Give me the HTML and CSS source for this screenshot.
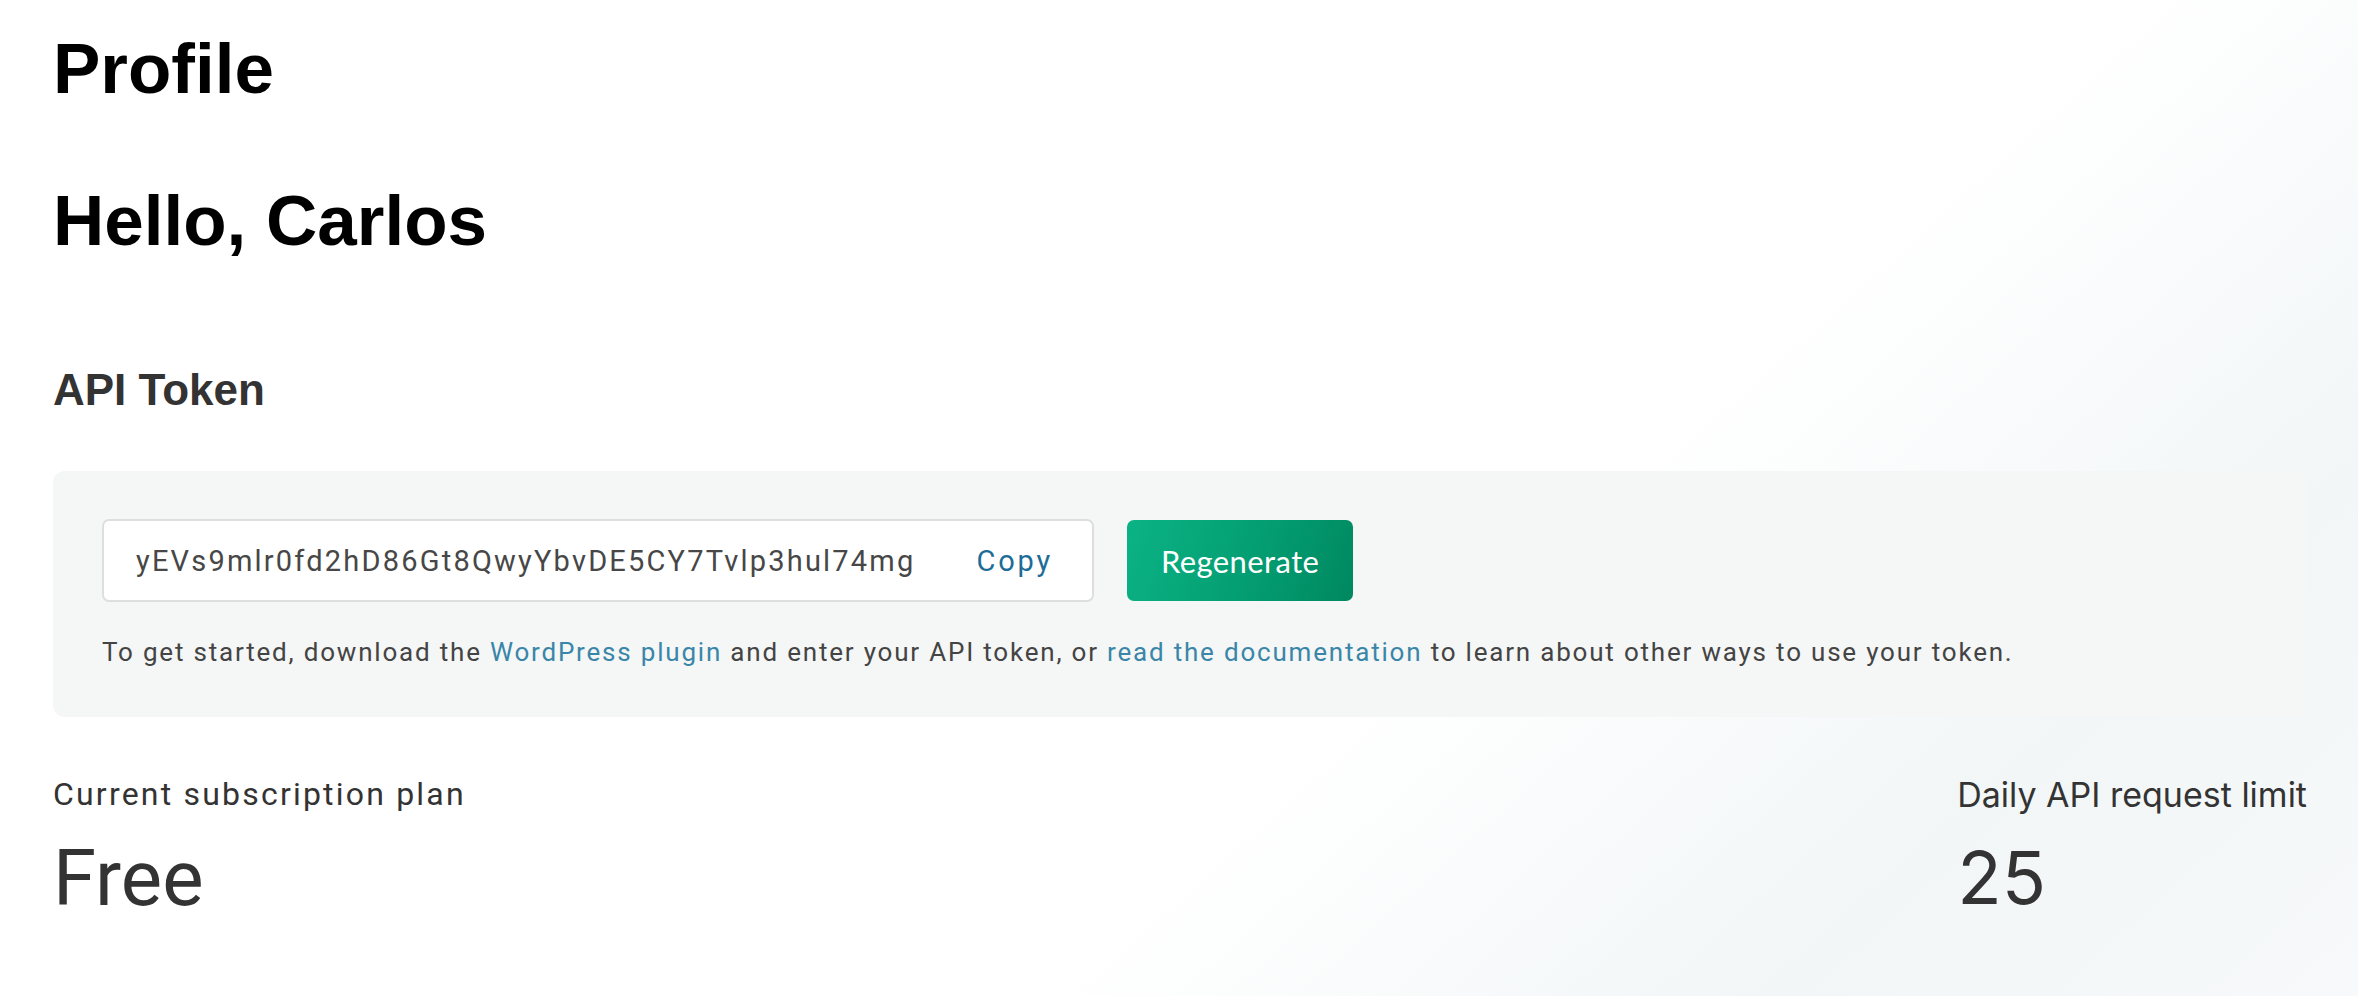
FILE: index.html
```html
<!DOCTYPE html>
<html lang="en">
<head>
<meta charset="utf-8">
<title>Profile</title>
<link rel="stylesheet" href="styles.css">
</head>
<body>
<main class="page">
  <h1 class="title">Profile</h1>
  <h1 class="greeting">Hello, Carlos</h1>
  <h3 class="section-title">API Token</h3>
  <section class="token-card">
    <div class="token-row">
      <div class="token-field">
        <span class="token-value">yEVs9mlr0fd2hD86Gt8QwyYbvDE5CY7Tvlp3hul74mg</span>
        <a class="copy-link" href="#">Copy</a>
      </div>
      <button class="regen-btn" type="button">Regenerate</button>
    </div>
    <p class="token-help">To get started, download the <a href="#" class="help-link">WordPress plugin</a> and enter your API token, or <a href="#" class="help-link">read the documentation</a> to learn about other ways to use your token.</p>
  </section>
  <section class="stats">
    <div class="stat stat-plan">
      <div class="stat-label">Current subscription plan</div>
      <div class="stat-value">Free</div>
    </div>
    <div class="stat stat-limit">
      <div class="stat-label">Daily API request limit</div>
      <div class="stat-value">25</div>
    </div>
  </section>
</main>
</body>
</html>
```

FILE: styles.css
```css
html, body {
  margin: 0;
  padding: 0;
}

body {
  min-height: 996px;
  background: linear-gradient(138deg, #ffffff 62%, #f2f6f7 83%, #f7f9fa 100%);
  font-family: "Roboto", "Liberation Sans", sans-serif;
  color: #333;
}

.page {
  padding: 26px 51px 0 53px;
}

.title,
.greeting {
  margin: 0;
  font-family: "Liberation Sans", Arial, sans-serif;
  font-weight: 700;
  font-size: 71px;
  line-height: 1.2;
  color: #000;
}

.greeting {
  margin-top: 67px;
}

.section-title {
  margin: 101px 0 0;
  font-family: "Liberation Sans", Arial, sans-serif;
  font-weight: 700;
  font-size: 44px;
  line-height: 1.2;
  color: #333;
}

.token-card {
  margin-top: 54px;
  background: #f5f6f6;
  border-radius: 12px;
  padding: 48px 49px 46px;
}

.token-row {
  display: flex;
  align-items: center;
  gap: 33px;
}

.token-field {
  box-sizing: border-box;
  width: 992px;
  height: 83px;
  display: flex;
  align-items: center;
  justify-content: space-between;
  padding: 0 39px 0 32px;
  background: #fff;
  border: 2px solid #dedede;
  border-radius: 7px;
  font-family: "Roboto", sans-serif;
  font-size: 29px;
  letter-spacing: 2.2px;
}

.token-value {
  color: #474747;
}

.copy-link {
  color: #1d6c98;
  text-decoration: none;
  letter-spacing: 2.8px;
}

.regen-btn {
  height: 81px;
  padding: 0 34px;
  border: 0;
  border-radius: 7px;
  background: linear-gradient(110deg, #0bb384 0%, #04a074 50%, #008860 100%);
  color: #fff;
  font-family: "Lato", sans-serif;
  font-size: 31px;
  letter-spacing: 0.4px;
}

.token-help {
  margin: 32px 0 0;
  font-size: 26px;
  line-height: 1.4;
  letter-spacing: 1.8px;
  color: #444;
}

.help-link {
  color: #3a86a8;
  text-decoration: none;
}

.stats {
  display: flex;
  justify-content: space-between;
  margin-top: 58px;
}

.stat-label {
  font-size: 32px;
  line-height: 1.2;
  letter-spacing: 2.2px;
  color: #333;
}

.stat-value {
  margin-top: 19px;
  font-size: 78px;
  line-height: 1.2;
  color: #333;
}

.stat-limit .stat-label,
.stat-limit .stat-value {
  font-family: "Inter", sans-serif;
  letter-spacing: 0;
}

.stat-limit .stat-label {
  font-size: 34px;
}

.stat-limit .stat-value {
  font-size: 73px;
}
```
